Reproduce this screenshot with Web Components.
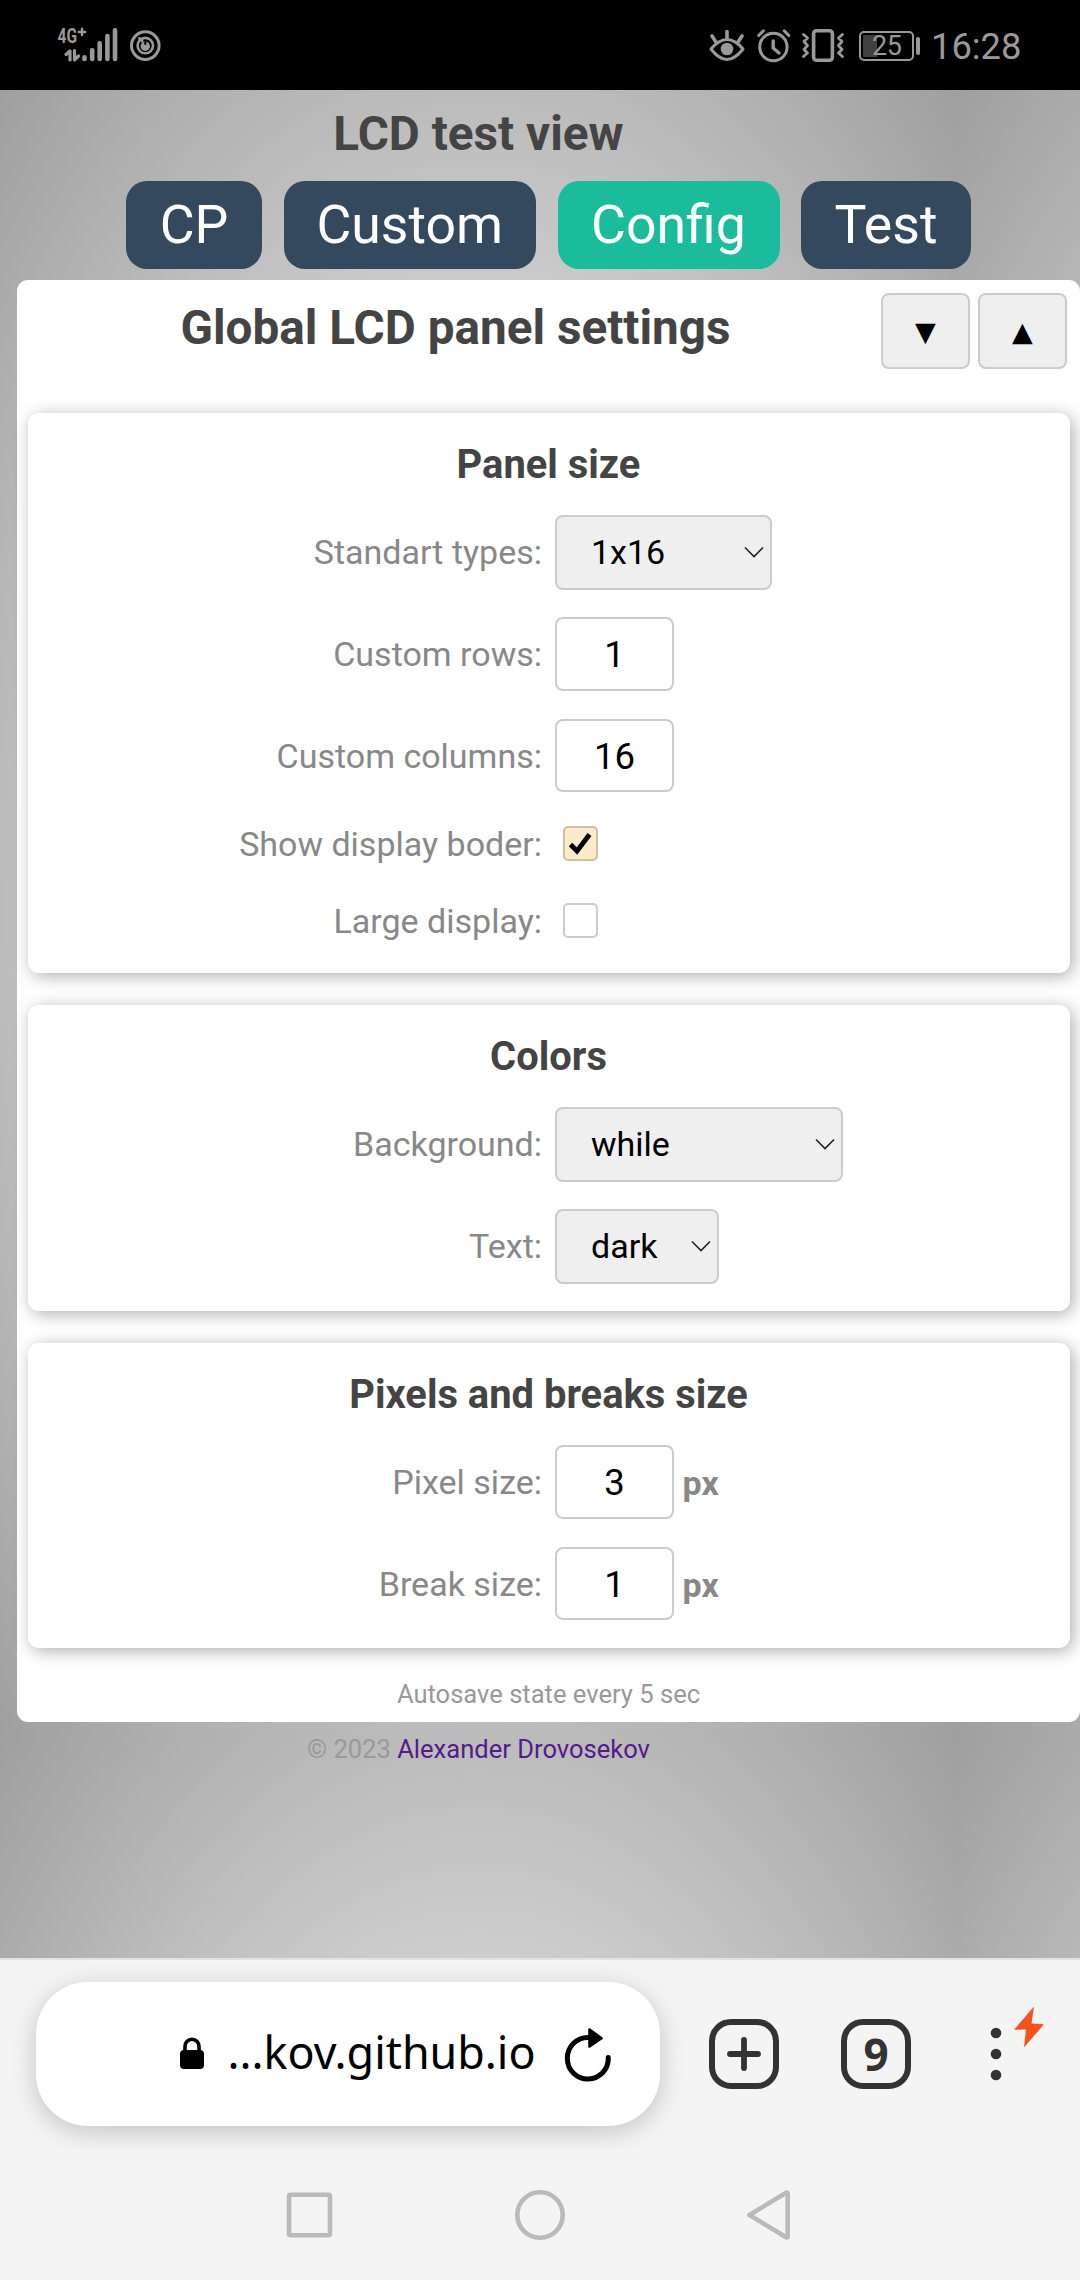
<!DOCTYPE html>
<html lang="en">
<head>
<meta charset="utf-8">
<title>LCD test view</title>
<style>
html,body{margin:0;padding:0;height:2280px;overflow:hidden;background:#f4f4f4}
body{font-family:Roboto,"Liberation Sans",sans-serif;color:#444;-webkit-font-smoothing:antialiased}
</style>
</head>
<body>
<phone-screen>
  <status-bar slot="status" time="16:28" battery="25"></status-bar>
  <lcd-page slot="page" heading="LCD test view">
    <nav-tab slot="tabs" style="width:136px">CP</nav-tab>
    <nav-tab slot="tabs" style="width:252.5px">Custom</nav-tab>
    <nav-tab slot="tabs" style="width:222px" active>Config</nav-tab>
    <nav-tab slot="tabs" style="width:170px">Test</nav-tab>
    <settings-panel heading="Global LCD panel settings">
      <settings-card heading="Panel size">
        <form-row label="Standart types:"><select-box style="width:217px">1x16</select-box></form-row>
        <form-row label="Custom rows:" kind="number"><number-box>1</number-box></form-row>
        <form-row label="Custom columns:" kind="number"><number-box>16</number-box></form-row>
        <form-row label="Show display boder:" kind="check"><check-box checked></check-box></form-row>
        <form-row label="Large display:" kind="check"><check-box></check-box></form-row>
      </settings-card>
      <settings-card heading="Colors">
        <form-row label="Background:"><select-box style="width:288px">while</select-box></form-row>
        <form-row label="Text:"><select-box style="width:164px">dark</select-box></form-row>
      </settings-card>
      <settings-card heading="Pixels and breaks size">
        <form-row label="Pixel size:" kind="number" unit="px"><number-box>3</number-box></form-row>
        <form-row label="Break size:" kind="number" unit="px"><number-box>1</number-box></form-row>
      </settings-card>
      <span slot="note">Autosave state every 5 sec</span>
    </settings-panel>
    <page-credit slot="footer" year="2023">Alexander Drovosekov</page-credit>
  </lcd-page>
  <browser-bar slot="browser" tabs="9">...kov.github.io</browser-bar>
  <system-nav slot="nav"></system-nav>
</phone-screen>
<script>
const define = (name, render) => customElements.define(name, class extends HTMLElement {
  connectedCallback() {
    if (this.shadowRoot) return;
    const attr = key => this.getAttribute(key) || '';
    this.attachShadow({mode: 'open'}).innerHTML = render(attr, this);
  }
});

define('phone-screen', () => `
<style>:host{display:flex;flex-direction:column;width:1080px;height:2280px;overflow:hidden}</style>
<slot name="status"></slot><slot name="page"></slot><slot name="browser"></slot><slot name="nav"></slot>`);

define('status-bar', a => `
<style>
:host{display:flex;height:90px;flex:none;background:#000;color:#999;align-items:flex-start;box-sizing:border-box;padding:20px 0 0 56px}
svg{display:block;flex:none;fill:none;stroke:#999;stroke-width:3;stroke-linecap:round;stroke-linejoin:round;overflow:visible}
.gap{flex:1}
.bat{box-sizing:border-box;margin:11px 0 0 9px;width:55px;height:29.5px;border:2px solid #999;border-radius:5px;padding:2px 2px;display:flex;position:relative;font-size:27px}
.bat i{width:14px;background:#404040;border-radius:2px 0 0 2px}
.bat b{font-weight:400;position:absolute;left:11.5px;top:-1px;line-height:29px;letter-spacing:-.3px}
.tip{width:4.5px;height:18px;border-radius:2px;background:#999;margin:17px 0 0 2px}
.time{font-size:36.3px;line-height:40px;margin:7px 59px 0 11px;width:90px;white-space:nowrap}
</style>
<svg width="108" height="44" viewBox="56 20 108 44">
 <text x="57.5" y="43" font-family="Roboto" font-weight="700" font-size="20.5" textLength="19.5" lengthAdjust="spacingAndGlyphs" fill="#999" stroke="none">4G</text>
 <path d="M82 28.7V35M78.8 32H85.2" stroke-width="2.4"/>
 <path d="M66 54.5L70 51V60M74.5 50.5V60L78.5 56" stroke-width="3.2"/>
 <path d="M84.5 57.3V59M92.2 50.3V59M99.7 43.3V59M107.4 36V59M115 30.3V59" stroke-width="4.6"/>
 <circle cx="145.3" cy="45.6" r="13.8"/><circle cx="145.3" cy="45.6" r="7.7" stroke-width="2.6"/>
 <circle cx="145.3" cy="46.2" r="4.7" fill="#999" stroke="none"/><path d="M145.3 42V44" stroke="#000" stroke-width="2"/><path d="M139.5 38.5L142 41" stroke-width="3"/>
</svg>
<span class="gap"></span>
<svg width="145" height="44" viewBox="705 20 145 44">
 <path d="M711 49Q727 30 743 49Q727 70 711 49Z"/><circle cx="727" cy="49" r="6.3" fill="#999" stroke="none"/>
 <path d="M727 31.5V38M712 36L716 42M742 36L738 42" stroke-width="3.6"/>
 <circle cx="773.4" cy="47" r="13.7"/><path d="M773.2 41V48L779 53" stroke-width="3.4"/>
 <path d="M758.7 35.5L763.4 30.8M784.2 30.8L788.8 35.5"/>
 <rect x="813.6" y="30.7" width="18.8" height="29.6" rx="3" stroke-width="3.6"/>
 <path d="M803.5 34.5L807.5 38L804 41.5L807.5 45.5L804 49.5L807.5 53L803.5 56.5M842.5 34.5L838.5 38L842 41.5L838.5 45.5L842 49.5L838.5 53L842.5 56.5" stroke-width="2.8"/>
</svg>
<span class="bat"><i></i><b>${a('battery')}</b></span><span class="tip"></span>
<span class="time">${a('time')}</span>`);

define('lcd-page', a => `
<style>
:host{display:block;height:1868px;flex:none;overflow:hidden;background:radial-gradient(ellipse farthest-corner at center,#fff,#9f9f9f) 0 0/957px 1645px repeat}
h1{margin:0 0 2px;width:957px;text-align:center;font-size:47.7px;line-height:89px;font-weight:700}
nav{display:flex;gap:21.5px;padding-left:126px;margin-bottom:11px}
</style>
<h1>${a('heading')}</h1><nav><slot name="tabs"></slot></nav><slot></slot><slot name="footer"></slot>`);

define('nav-tab', () => `
<style>
:host{display:block;flex:none;height:88px;line-height:88px;border-radius:21px;background:#34495e;color:#fff;font-size:53.6px;text-align:center;white-space:nowrap}
:host([active]){background:#1abc9c}
</style><slot></slot>`);

define('settings-panel', a => `
<style>
:host{display:block;margin-left:17px;width:1063px;background:#fff;border-radius:11px}
header{display:flex;height:133px;box-sizing:border-box;padding:0 13px 0 13px;align-items:flex-start}
h2{margin:0;flex:1;text-align:center;font-size:47.7px;line-height:97px;font-weight:700;white-space:nowrap}
.keys{display:flex;gap:8px;padding-top:13px}
.body{display:flex;flex-direction:column;gap:32px;padding:0 10.5px}
footer{height:74px;box-sizing:border-box;padding-top:26px;line-height:40px;font-size:25.55px;text-align:center;color:#999}
</style>
<header><h2>${a('heading')}</h2><div class="keys"><arrow-key>▼</arrow-key><arrow-key>▲</arrow-key></div></header>
<div class="body"><slot></slot></div>
<footer><slot name="note"></slot></footer>`);

define('arrow-key', () => `
<style>:host{display:block;box-sizing:border-box;width:89px;height:76px;border:2px solid #ccc;border-radius:8px;background:#efefef;color:#000;text-align:center;font:27px/73px "DejaVu Sans",sans-serif}</style><slot></slot>`);

define('settings-card', a => `
<style>
:host{display:flow-root;background:#fff;border-radius:11px;box-shadow:3px 3px 17px rgba(0,0,0,.32)}
h3{margin:0;height:102px;text-align:center;font-size:39.9px;line-height:103px;font-weight:700}
</style><h3>${a('heading')}</h3><slot></slot>`);

define('form-row', a => `
<style>
:host{display:grid;grid-template-columns:514.5px 1fr;column-gap:13px;height:102px;align-items:start;font-size:34px;color:#888}
:host([kind=number]){height:101.5px}
:host([kind=check]){height:76.5px}
label{text-align:right;line-height:74.5px}
:host([kind=check]) label{line-height:49.5px}
div{display:flex;align-items:flex-start}
b{line-height:77px;margin-left:8.5px}
</style><label>${a('label')}</label><div><slot></slot>${a('unit') && `<b>${a('unit')}</b>`}</div>`);

define('select-box', () => `
<style>
:host{display:flex;box-sizing:border-box;height:74.5px;border:2px solid #ccc;border-radius:8px;background:#efefef;color:#000;align-items:center;justify-content:space-between;padding:0 6px 0 34px;line-height:70px}
svg{display:block}
</style><span><slot></slot></span><svg width="20" height="12" viewBox="0 0 20 12"><path d="M1 1.5L10 10.5L19 1.5" fill="none" stroke="#222" stroke-width="1.6"/></svg>`);

define('number-box', () => `
<style>:host{display:block;box-sizing:border-box;width:119px;height:73.5px;border:2px solid #ccc;border-radius:8px;background:#fff;color:#000;font-size:36.5px;line-height:71.5px;text-align:center}</style><slot></slot>`);

define('check-box', (a, el) => `
<style>
:host{display:block;box-sizing:border-box;width:35px;height:35px;margin:6px 0 0 8px;border:2px solid #ccc;border-radius:5px;background:#fff}
:host([checked]){background:#faebcd;border-color:#cfc09e}
svg{display:block}
</style>${el.hasAttribute('checked') ? '<svg width="31" height="31" viewBox="0 0 31 31"><path d="M5.5 16.5L12 23L24.500 6.5" fill="none" stroke="#000" stroke-width="4.8"/></svg>' : ''}`);

define('page-credit', a => `
<style>:host{display:block;width:957px;text-align:center;font-size:25.55px;line-height:54px;color:#999}a{color:#551a8b}</style>© ${a('year')} <a><slot></slot></a>`);

define('browser-bar', a => `
<style>
:host{display:flex;flex:none;height:192px;box-sizing:border-box;border-top:2px solid #e2e2e2;background:#f4f4f4;padding:22px 0 0 36px;align-items:flex-start}
.url{display:flex;flex:none;align-items:center;box-sizing:border-box;width:624px;height:144px;border-radius:52px;background:#fff;box-shadow:0 6px 26px rgba(0,0,0,.2);padding-left:144px;color:#000}
.host{flex:none;font:44.8px/60px "Noto Sans",sans-serif;margin:-5px 0 0 23.5px;width:337.5px;white-space:nowrap}
svg{display:block;flex:none;overflow:visible}
.lock{margin-top:-3px}
.sq{box-sizing:border-box;width:70px;height:70px;margin-top:37px;border:6px solid #333;border-radius:22px;display:flex;align-items:center;justify-content:center;color:#333;font:700 44px/56px "Noto Sans",sans-serif}
</style>
<div class="url">
 <svg class="lock" width="24" height="32" viewBox="0 0 24 32"><rect y="13" width="24" height="19" rx="4"/><path d="M5 14V9.5a7 7.3 0 0 1 14 0V14" fill="none" stroke="#000" stroke-width="3.6"/></svg>
 <span class="host"><slot></slot></span>
 <svg width="46" height="53" viewBox="565 2027 46 53"><path d="M608.3 2056.5A20.5 20.8 0 1 1 588 2036.5" fill="none" stroke="#000" stroke-width="5" stroke-linecap="round"/><path d="M589.5 2028.5L601.5 2037.2L589.5 2045.5Z" stroke="#000" stroke-width="2.6" stroke-linejoin="round"/></svg>
</div>
<div class="sq" style="margin-left:49px"><svg width="34" height="34" viewBox="0 0 34 34"><path d="M17 3V31M3 17H31" stroke="#333" stroke-width="5.8" stroke-linecap="round"/></svg></div>
<div class="sq" style="margin-left:62px">${a('tabs')}</div>
<svg style="margin:25px 0 0 79px" width="55" height="76" viewBox="990 2007 55 76"><g fill="#333"><circle cx="996" cy="2033" r="5.3"/><circle cx="996" cy="2054" r="5.3"/><circle cx="996" cy="2075" r="5.3"/></g><path d="M1034 2006.5L1014 2029.8L1026 2029.5L1024 2047.5L1044 2024.2L1031.5 2023.5Z" fill="#f8521c"/></svg>`);

define('system-nav', () => `
<style>:host{display:grid;flex:1;grid-template-columns:50px 54px 47px;column-gap:179px;background:#f4f4f4;padding:38px 0 0 284px;align-content:start}svg{display:block;fill:none;stroke:#bababa;stroke-width:4.6;stroke-linejoin:round}svg:last-child{margin-left:-1px}</style>
<svg width="50" height="54" viewBox="284 2188 50 54"><rect x="289" y="2194.7" width="41" height="40.6" rx="1.5"/></svg>
<svg width="54" height="54" viewBox="513 2188 54 54"><circle cx="540" cy="2215" r="22.7"/></svg>
<svg width="47" height="54" viewBox="745 2188 47 54"><path d="M749.5 2215L786.5 2192.5Q787.7 2192.5 787.7 2194V2236Q787.7 2237.5 786.5 2237.5Z"/></svg>`);
</script>
</body>
</html>
